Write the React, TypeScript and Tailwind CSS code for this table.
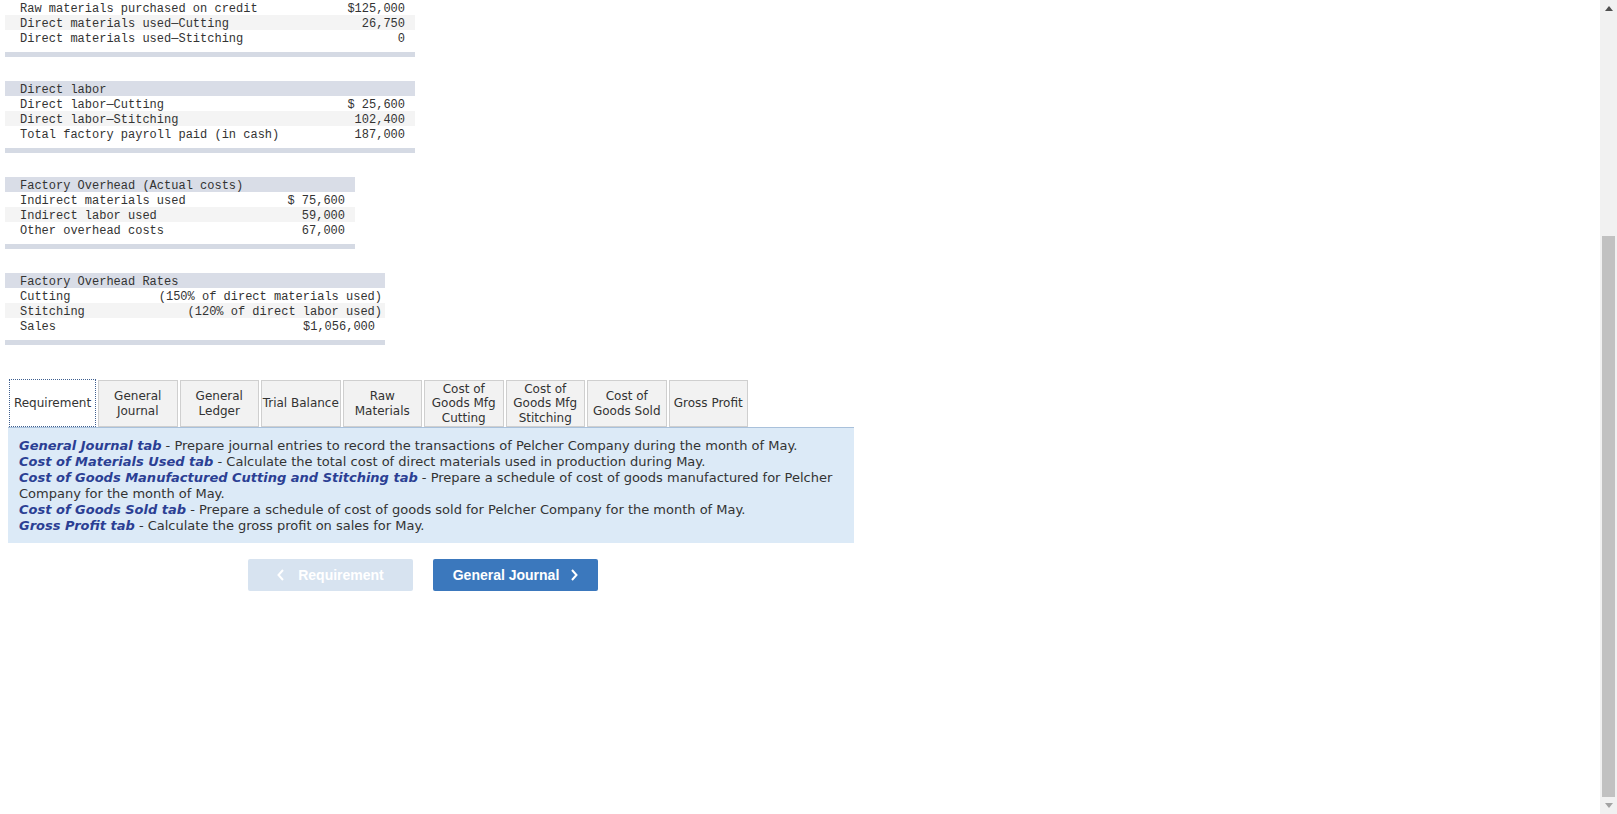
import React from "react";

type Row = { label: string; value?: string; pr?: string; header?: boolean };

const mono = { fontFamily: '"Liberation Mono", "DejaVu Sans Mono", monospace' };
const verdana = { fontFamily: '"DejaVu Sans", Verdana, sans-serif' };

function DataTable({ rows, width }: { rows: Row[]; width: string }) {
  let idx = 0;
  return (
    <div className={`${width} flex flex-col`}>
      {rows.map((r, i) => {
        let bg = "bg-white";
        if (r.header) bg = "bg-[#d9dde7]";
        else {
          idx += 1;
          if (idx % 2 === 0) bg = "bg-[#f4f4f4]";
        }
        return (
          <div
            key={i}
            className={`flex h-[15px] items-start justify-between whitespace-pre pl-[15px] pt-[4px] text-[12px] leading-[11px] text-[#333] ${bg} ${r.pr ?? "pr-[10px]"}`}
            style={mono}
          >
            <span>{r.label}</span>
            <span>{r.value ?? ""}</span>
          </div>
        );
      })}
      <div className="h-[7px]" />
      <div className="h-[5px] bg-[#d5dae4]" />
    </div>
  );
}

const tabs: { label: string[]; active?: boolean }[] = [
  { label: ["Requirement"], active: true },
  { label: ["General", "Journal"] },
  { label: ["General", "Ledger"] },
  { label: ["Trial Balance"] },
  { label: ["Raw", "Materials"] },
  { label: ["Cost of", "Goods Mfg", "Cutting"] },
  { label: ["Cost of", "Goods Mfg", "Stitching"] },
  { label: ["Cost of", "Goods Sold"] },
  { label: ["Gross Profit"] },
];

function Scrollbar() {
  return (
    <div className="flex h-[814px] w-[17px] flex-col bg-[#f1f1f1]">
      <div className="flex h-[17px] items-center justify-center">
        <svg width="8" height="5" viewBox="0 0 8 5">
          <polygon points="0,5 8,5 4,0" fill="#505050" />
        </svg>
      </div>
      <div className="h-[219px]" />
      <div className="mx-[2px] h-[561px] bg-[#c1c1c1]" />
      <div className="flex h-[17px] items-center justify-center">
        <svg width="8" height="5" viewBox="0 0 8 5">
          <polygon points="0,0 8,0 4,5" fill="#a3a3a3" />
        </svg>
      </div>
    </div>
  );
}

export default function App() {
  return (
    <div className="flex h-[814px] w-[1617px] overflow-hidden bg-white">
      <div className="flex flex-1 flex-col">
        <div className="flex flex-col gap-[24px] pl-[5px]">
          <DataTable
            width="w-[410px]"
            rows={[
              { label: "Raw materials purchased on credit", value: "$125,000" },
              { label: "Direct materials used—Cutting", value: "26,750" },
              { label: "Direct materials used—Stitching", value: "0" },
            ]}
          />
          <DataTable
            width="w-[410px]"
            rows={[
              { label: "Direct labor", header: true },
              { label: "Direct labor—Cutting", value: "$ 25,600" },
              { label: "Direct labor—Stitching", value: "102,400" },
              { label: "Total factory payroll paid (in cash)", value: "187,000" },
            ]}
          />
          <DataTable
            width="w-[350px]"
            rows={[
              { label: "Factory Overhead (Actual costs)", header: true },
              { label: "Indirect materials used", value: "$ 75,600" },
              { label: "Indirect labor used", value: "59,000" },
              { label: "Other overhead costs", value: "67,000" },
            ]}
          />
          <DataTable
            width="w-[380px]"
            rows={[
              { label: "Factory Overhead Rates", header: true },
              { label: "Cutting", value: "(150% of direct materials used)", pr: "pr-[3px]" },
              { label: "Stitching", value: "(120% of direct labor used)", pr: "pr-[3px]" },
              { label: "Sales", value: "$1,056,000", pr: "pr-[10px]" },
            ]}
          />
        </div>

        <div className="mt-[34px] w-[854px] pl-[8px]" style={verdana}>
          <div className="flex items-end gap-[2px] pl-[1px]">
            {tabs.map((t, i) => (
              <div
                key={i}
                className={
                  t.active
                    ? "flex h-[48px] w-[87px] items-center justify-center border border-dotted border-[#3f5f8f] bg-white text-[12px] leading-[14.5px] text-[#333]"
                    : "flex h-[47px] w-[79.5px] flex-col items-center justify-center border border-[#cfcfcf] bg-[#f2f2f2] text-center text-[12px] leading-[14.5px] text-[#333]"
                }
              >
                {t.label.map((l, j) => (
                  <span key={j} className="whitespace-nowrap">
                    {l}
                  </span>
                ))}
              </div>
            ))}
          </div>
          <div className="border-t border-[#a9c1db] bg-[#dceaf7] pb-[9px] pl-[11px] pr-[10px] pt-[10px] text-[13px] leading-[16px] text-[#333]">
            <p>
              <b className="italic text-[#2b3f94]">General Journal tab</b> - Prepare journal entries to record the
              transactions of Pelcher Company during the month of May.
            </p>
            <p>
              <b className="italic text-[#2b3f94]">Cost of Materials Used tab</b> - Calculate the total cost of direct
              materials used in production during May.
            </p>
            <p>
              <b className="italic text-[#2b3f94]">Cost of Goods Manufactured Cutting and Stitching tab</b> - Prepare a
              schedule of cost of goods manufactured for Pelcher Company for the month of May.
            </p>
            <p>
              <b className="italic text-[#2b3f94]">Cost of Goods Sold tab</b> - Prepare a schedule of cost of goods sold
              for Pelcher Company for the month of May.
            </p>
            <p>
              <b className="italic text-[#2b3f94]">Gross Profit tab</b> - Calculate the gross profit on sales for May.
            </p>
          </div>
        </div>

        <div
          className="mt-[16px] flex gap-[20px] pl-[248px] text-[14px] font-bold text-white"
          style={{ fontFamily: '"Liberation Sans", Arial, sans-serif' }}
        >
          <div className="flex h-[32px] w-[165px] items-center justify-center gap-[13px] rounded-[2px] bg-[#d7e3f0]">
            <svg width="8" height="12" viewBox="0 0 8 12">
              <polyline points="6,1 1.5,6 6,11" fill="none" stroke="white" strokeWidth="2" />
            </svg>
            <span>Requirement</span>
          </div>
          <div className="flex h-[32px] w-[165px] items-center justify-center gap-[11px] rounded-[2px] bg-[#3b78bd]">
            <span>General Journal</span>
            <svg width="8" height="12" viewBox="0 0 8 12">
              <polyline points="2,1 6.5,6 2,11" fill="none" stroke="white" strokeWidth="2" />
            </svg>
          </div>
        </div>
      </div>
      <Scrollbar />
    </div>
  );
}
